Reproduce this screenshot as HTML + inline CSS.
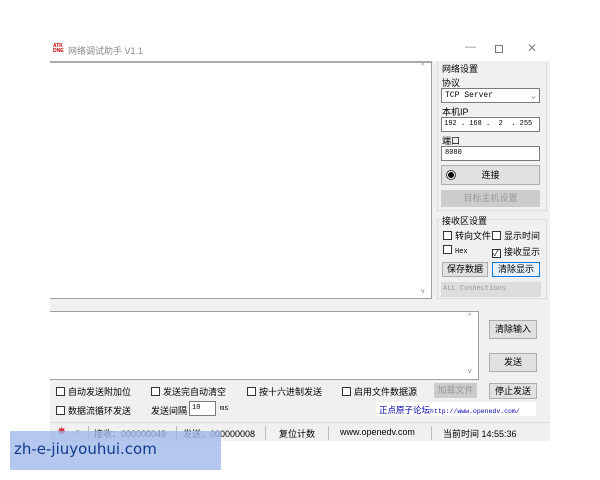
<!DOCTYPE html>
<html><head><meta charset="utf-8"><style>
*{margin:0;padding:0;box-sizing:border-box}
body{width:600px;height:480px;background:#fff;position:relative;overflow:hidden;font-family:"Liberation Sans","Noto Sans CJK SC",sans-serif;font-size:9px;color:#000}
.a{position:absolute;white-space:nowrap}
.win{left:50px;top:61px;width:500px;height:380px;background:#f0f0f0}
.box{background:#fff;border:1px solid #a0a0a0}
.btn{background:#e1e1e1;border:1px solid #adadad;text-align:center}
.cb{display:inline-block;width:9px;height:9px;border:1px solid #333;background:#fff;vertical-align:-1px;margin-right:3px}
.mono{font-family:"Liberation Mono",monospace;font-size:8px}
.gray{color:#888}
.sep{width:1px;height:14px;background:#bbb;top:426px}
</style></head><body>
<div class="a" style="left:53px;top:44px;width:11px;height:11px;font-size:5px;line-height:5px;color:#c00;font-weight:bold">ATK<br>DNE</div>
<div class="a gray" style="left:68px;top:44px;font-size:9px">网络调试助手 V1.1</div>
<div class="a gray" style="left:465px;top:41px;font-size:11px">—</div>
<div class="a" style="left:495px;top:45px;width:8px;height:8px;border:1px solid #777"></div>
<div class="a gray" style="left:527px;top:41px;font-size:12px">✕</div>
<div class="a win"></div>
<div class="a box" style="left:50px;top:61px;width:382px;height:238px;border-left:none;border-top:2px solid #aaa"></div>
<div class="a gray" style="left:421px;top:63px;font-size:7px">^</div>
<div class="a gray" style="left:421px;top:288px;font-size:7px">v</div>
<div class="a" style="left:437px;top:61px;width:110px;height:150px;border:1px solid #ddd;border-top:none"></div>
<div class="a" style="left:442px;top:62px">网络设置</div>
<div class="a" style="left:442px;top:76px">协议</div>
<div class="a box mono" style="left:441px;top:88px;width:99px;height:15px;padding:2px 3px;border-color:#7a7a7a">TCP Server<span style="position:absolute;right:3px;color:#666">⌄</span></div>
<div class="a" style="left:442px;top:105px">本机IP</div>
<div class="a box mono" style="left:441px;top:117px;width:99px;height:15px;padding:2px 2px;border-color:#7a7a7a;font-size:7px;letter-spacing:0">192 <b>.</b> 168 <b>.</b>&nbsp; 2&nbsp; <b>.</b> 255</div>
<div class="a" style="left:442px;top:134px">端口</div>
<div class="a box mono" style="left:441px;top:146px;width:99px;height:15px;padding:2px 3px;border-color:#7a7a7a;font-size:7px">8080</div>
<div class="a btn" style="left:441px;top:165px;width:99px;height:20px;line-height:18px">连接</div>
<div class="a" style="left:446px;top:170px;width:10px;height:10px;border-radius:50%;border:1px solid #333;background:#fff"><div style="margin:1px;width:6px;height:6px;border-radius:50%;background:#000"></div></div>
<div class="a btn gray" style="left:441px;top:190px;width:99px;height:17px;line-height:15px;background:#ccc;border-color:#ccc;color:#999">目标主机设置</div>
<div class="a" style="left:437px;top:219px;width:110px;height:80px;border:1px solid #ddd"></div>
<div class="a" style="left:442px;top:214px;background:#f0f0f0">接收区设置</div>
<div class="a" style="left:443px;top:229px"><span class="cb"></span>转向文件</div>
<div class="a" style="left:492px;top:229px"><span class="cb"></span>显示时间</div>
<div class="a" style="left:443px;top:245px"><span class="cb"></span><span class="mono" style="font-size:7px">Hex</span></div>
<div class="a" style="left:492px;top:245px"><span class="cb" style="font-size:8px;line-height:7px">✓</span>接收显示</div>
<div class="a btn" style="left:442px;top:262px;width:46px;height:15px;line-height:13px">保存数据</div>
<div class="a btn" style="left:492px;top:262px;width:48px;height:15px;line-height:13px;border:1px solid #0078d7;background:#e5f1fb">清除显示</div>
<div class="a mono" style="left:441px;top:282px;width:100px;height:15px;padding:3px 2px;background:#ddd;color:#999;font-size:7px">ALL Connections</div>
<div class="a box" style="left:50px;top:311px;width:429px;height:69px;border-left:none"></div>
<div class="a gray" style="left:468px;top:313px;font-size:7px">^</div>
<div class="a gray" style="left:468px;top:368px;font-size:7px">v</div>
<div class="a btn" style="left:489px;top:320px;width:48px;height:19px;line-height:17px">清除输入</div>
<div class="a btn" style="left:489px;top:353px;width:48px;height:19px;line-height:17px">发送</div>
<div class="a" style="left:56px;top:385px"><span class="cb"></span>自动发送附加位</div>
<div class="a" style="left:151px;top:385px"><span class="cb"></span>发送完自动清空</div>
<div class="a" style="left:247px;top:385px"><span class="cb"></span>按十六进制发送</div>
<div class="a" style="left:342px;top:385px"><span class="cb"></span>启用文件数据源</div>
<div class="a btn" style="left:434px;top:383px;width:43px;height:15px;line-height:13px;background:#ccc;border-color:#ccc;color:#999">加载文件</div>
<div class="a btn" style="left:489px;top:383px;width:48px;height:16px;line-height:14px">停止发送</div>
<div class="a" style="left:56px;top:404px"><span class="cb"></span>数据流循环发送</div>
<div class="a" style="left:151px;top:404px">发送间隔</div>
<div class="a box mono" style="left:189px;top:401px;width:27px;height:15px;padding:2px;border-color:#7a7a7a;font-size:7px">10</div>
<div class="a mono" style="left:220px;top:405px;font-size:7px">ms</div>
<div class="a" style="left:376px;top:402px;width:160px;height:14px;background:#fff;padding:2px 3px;color:#00a;font-size:8.5px">正点原子论坛<span class="mono" style="font-size:6.5px">http://www.openedv.com/</span></div>
<div class="a" style="left:50px;top:422px;width:500px;height:19px;border-top:1px solid #ddd"></div>
<div class="a" style="left:57px;top:425px;color:#c33;font-size:11px">✸</div>
<div class="a gray" style="left:76px;top:428px;font-size:7px">▾</div>
<div class="a sep" style="left:88px"></div>
<div class="a" style="left:94px;top:427px">接收：000000049</div>
<div class="a sep" style="left:176px"></div>
<div class="a" style="left:183px;top:427px">发送：000000008</div>
<div class="a sep" style="left:265px"></div>
<div class="a" style="left:279px;top:427px">复位计数</div>
<div class="a sep" style="left:328px"></div>
<div class="a" style="left:340px;top:427px">www.openedv.com</div>
<div class="a sep" style="left:431px"></div>
<div class="a" style="left:443px;top:427px">当前时间 14:55:36</div>
<div class="a" style="left:10px;top:431px;width:211px;height:39px;background:rgba(160,185,235,0.8);color:#123a8c;font-size:15px;padding:9px 0 0 4px;font-family:'DejaVu Sans',sans-serif">zh-e-jiuyouhui.com</div>
</body></html>
